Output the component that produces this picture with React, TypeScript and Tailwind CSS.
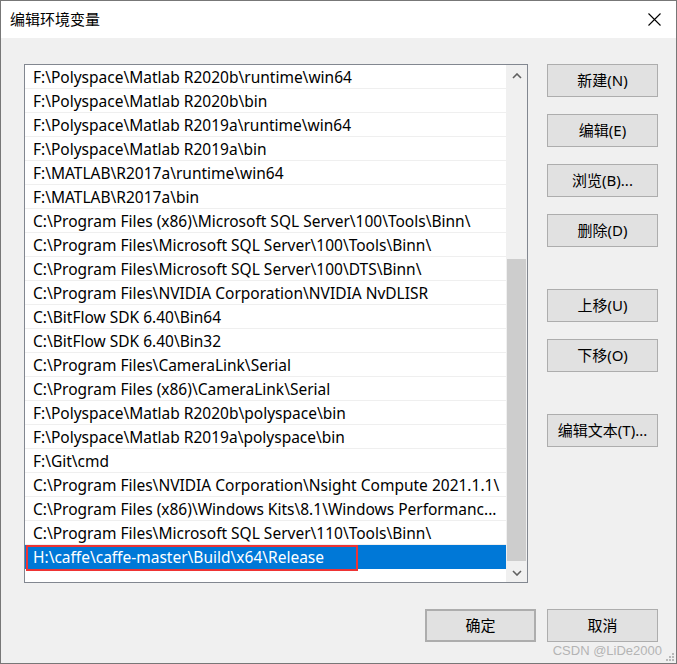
const paths = [
  "F:\\Polyspace\\Matlab R2020b\\runtime\\win64",
  "F:\\Polyspace\\Matlab R2020b\\bin",
  "F:\\Polyspace\\Matlab R2019a\\runtime\\win64",
  "F:\\Polyspace\\Matlab R2019a\\bin",
  "F:\\MATLAB\\R2017a\\runtime\\win64",
  "F:\\MATLAB\\R2017a\\bin",
  "C:\\Program Files (x86)\\Microsoft SQL Server\\100\\Tools\\Binn\\",
  "C:\\Program Files\\Microsoft SQL Server\\100\\Tools\\Binn\\",
  "C:\\Program Files\\Microsoft SQL Server\\100\\DTS\\Binn\\",
  "C:\\Program Files\\NVIDIA Corporation\\NVIDIA NvDLISR",
  "C:\\BitFlow SDK 6.40\\Bin64",
  "C:\\BitFlow SDK 6.40\\Bin32",
  "C:\\Program Files\\CameraLink\\Serial",
  "C:\\Program Files (x86)\\CameraLink\\Serial",
  "F:\\Polyspace\\Matlab R2020b\\polyspace\\bin",
  "F:\\Polyspace\\Matlab R2019a\\polyspace\\bin",
  "F:\\Git\\cmd",
  "C:\\Program Files\\NVIDIA Corporation\\Nsight Compute 2021.1.1\\",
  "C:\\Program Files (x86)\\Windows Kits\\8.1\\Windows Performanc...",
  "C:\\Program Files\\Microsoft SQL Server\\110\\Tools\\Binn\\",
  "H:\\caffe\\caffe-master\\Build\\x64\\Release",
];

const Chevron = ({ down }: { down?: boolean }) => (
  <svg width="10" height="6" viewBox="0 0 10 6">
    <path
      d={down ? "M1 1 L5 5 L9 1" : "M1 5 L5 1 L9 5"}
      fill="none"
      stroke="#606060"
      strokeWidth="1.6"
    />
  </svg>
);

const Btn = ({ label, className = "" }: { label: string; className?: string }) => (
  <button
    className={
      "w-[111px] h-[33px] bg-[#e1e1e1] border border-[#adadad] text-[15px] text-black flex items-center justify-center " +
      className
    }
  >
    {label}
  </button>
);

export default function App() {
  return (
    <div className="w-[677px] h-[664px] border border-[#777777] bg-[#f0f0f0] flex flex-col relative font-['Noto_Sans','Noto_Sans_CJK_SC',sans-serif] text-black">
      {/* title bar */}
      <div className="h-[37px] bg-white flex items-center justify-between pl-[9px] pr-[15px]">
        <span className="text-[15px]">编辑环境变量</span>
        <svg width="13" height="13" viewBox="0 0 13 13">
          <path d="M0.5 0.5 L12.5 12.5 M12.5 0.5 L0.5 12.5" stroke="#000" strokeWidth="1.1" />
        </svg>
      </div>

      <div className="flex-1 flex flex-col pl-[23px] pr-[18px] pt-[26px]">
        <div className="flex">
          {/* list */}
          <div className="w-[504px] h-[519px] border border-[#828790] bg-white flex">
            <div className="flex-1 flex flex-col overflow-hidden">
              {paths.map((p, i) => {
                const sel = i === paths.length - 1;
                return (
                  <div
                    key={i}
                    className={
                      "relative h-[24px] shrink-0 border-b pl-[8px] pt-[3px] flex items-center whitespace-nowrap text-[15.5px] " +
                      (sel ? "bg-[#0078d7] text-white border-[#0078d7]" : "border-[#efefef]")
                    }
                  >
                    {p}
                    {sel && (
                      <div className="absolute left-[1px] top-0 w-[332px] h-[26px] border-2 border-[#ee3434]" />
                    )}
                  </div>
                );
              })}
            </div>
            {/* scrollbar */}
            <div className="w-[21px] bg-[#f0f0f0] flex flex-col items-center">
              <div className="h-[17px] w-full flex items-center justify-center pt-[4px]">
                <Chevron />
              </div>
              <div className="flex-1" />
              <div className="w-[19px] h-[302px] bg-[#cdcdcd]" />
              <div className="h-[4px]" />
              <div className="h-[17px] w-full flex items-center justify-center pb-[2px]">
                <Chevron down />
              </div>
            </div>
          </div>

          {/* right buttons */}
          <div className="ml-[19px] flex flex-col">
            <Btn label="新建(N)" />
            <Btn label="编辑(E)" className="mt-[17px]" />
            <Btn label="浏览(B)..." className="mt-[17px]" />
            <Btn label="删除(D)" className="mt-[17px]" />
            <Btn label="上移(U)" className="mt-[42px]" />
            <Btn label="下移(O)" className="mt-[17px]" />
            <Btn label="编辑文本(T)..." className="mt-[42px]" />
          </div>
        </div>

        <div className="mt-[26px] flex justify-end gap-[11px]">
          <Btn label="确定" className="border-2 border-[#0078d7]" />
          <Btn label="取消" />
        </div>
      </div>

      <span className="absolute right-[14px] bottom-[3px] text-[13px] text-[#b4b4b4] font-['Liberation_Sans',sans-serif]">
        CSDN @LiDe2000
      </span>
      <svg className="absolute right-[1px] bottom-[1px]" width="10" height="10" viewBox="0 0 10 10">
        <rect x="7" y="1" width="2" height="2" fill="#b8b8b8" />
        <rect x="4" y="4" width="2" height="2" fill="#b8b8b8" />
        <rect x="7" y="4" width="2" height="2" fill="#b8b8b8" />
        <rect x="1" y="7" width="2" height="2" fill="#b8b8b8" />
        <rect x="4" y="7" width="2" height="2" fill="#b8b8b8" />
        <rect x="7" y="7" width="2" height="2" fill="#b8b8b8" />
      </svg>
    </div>
  );
}
